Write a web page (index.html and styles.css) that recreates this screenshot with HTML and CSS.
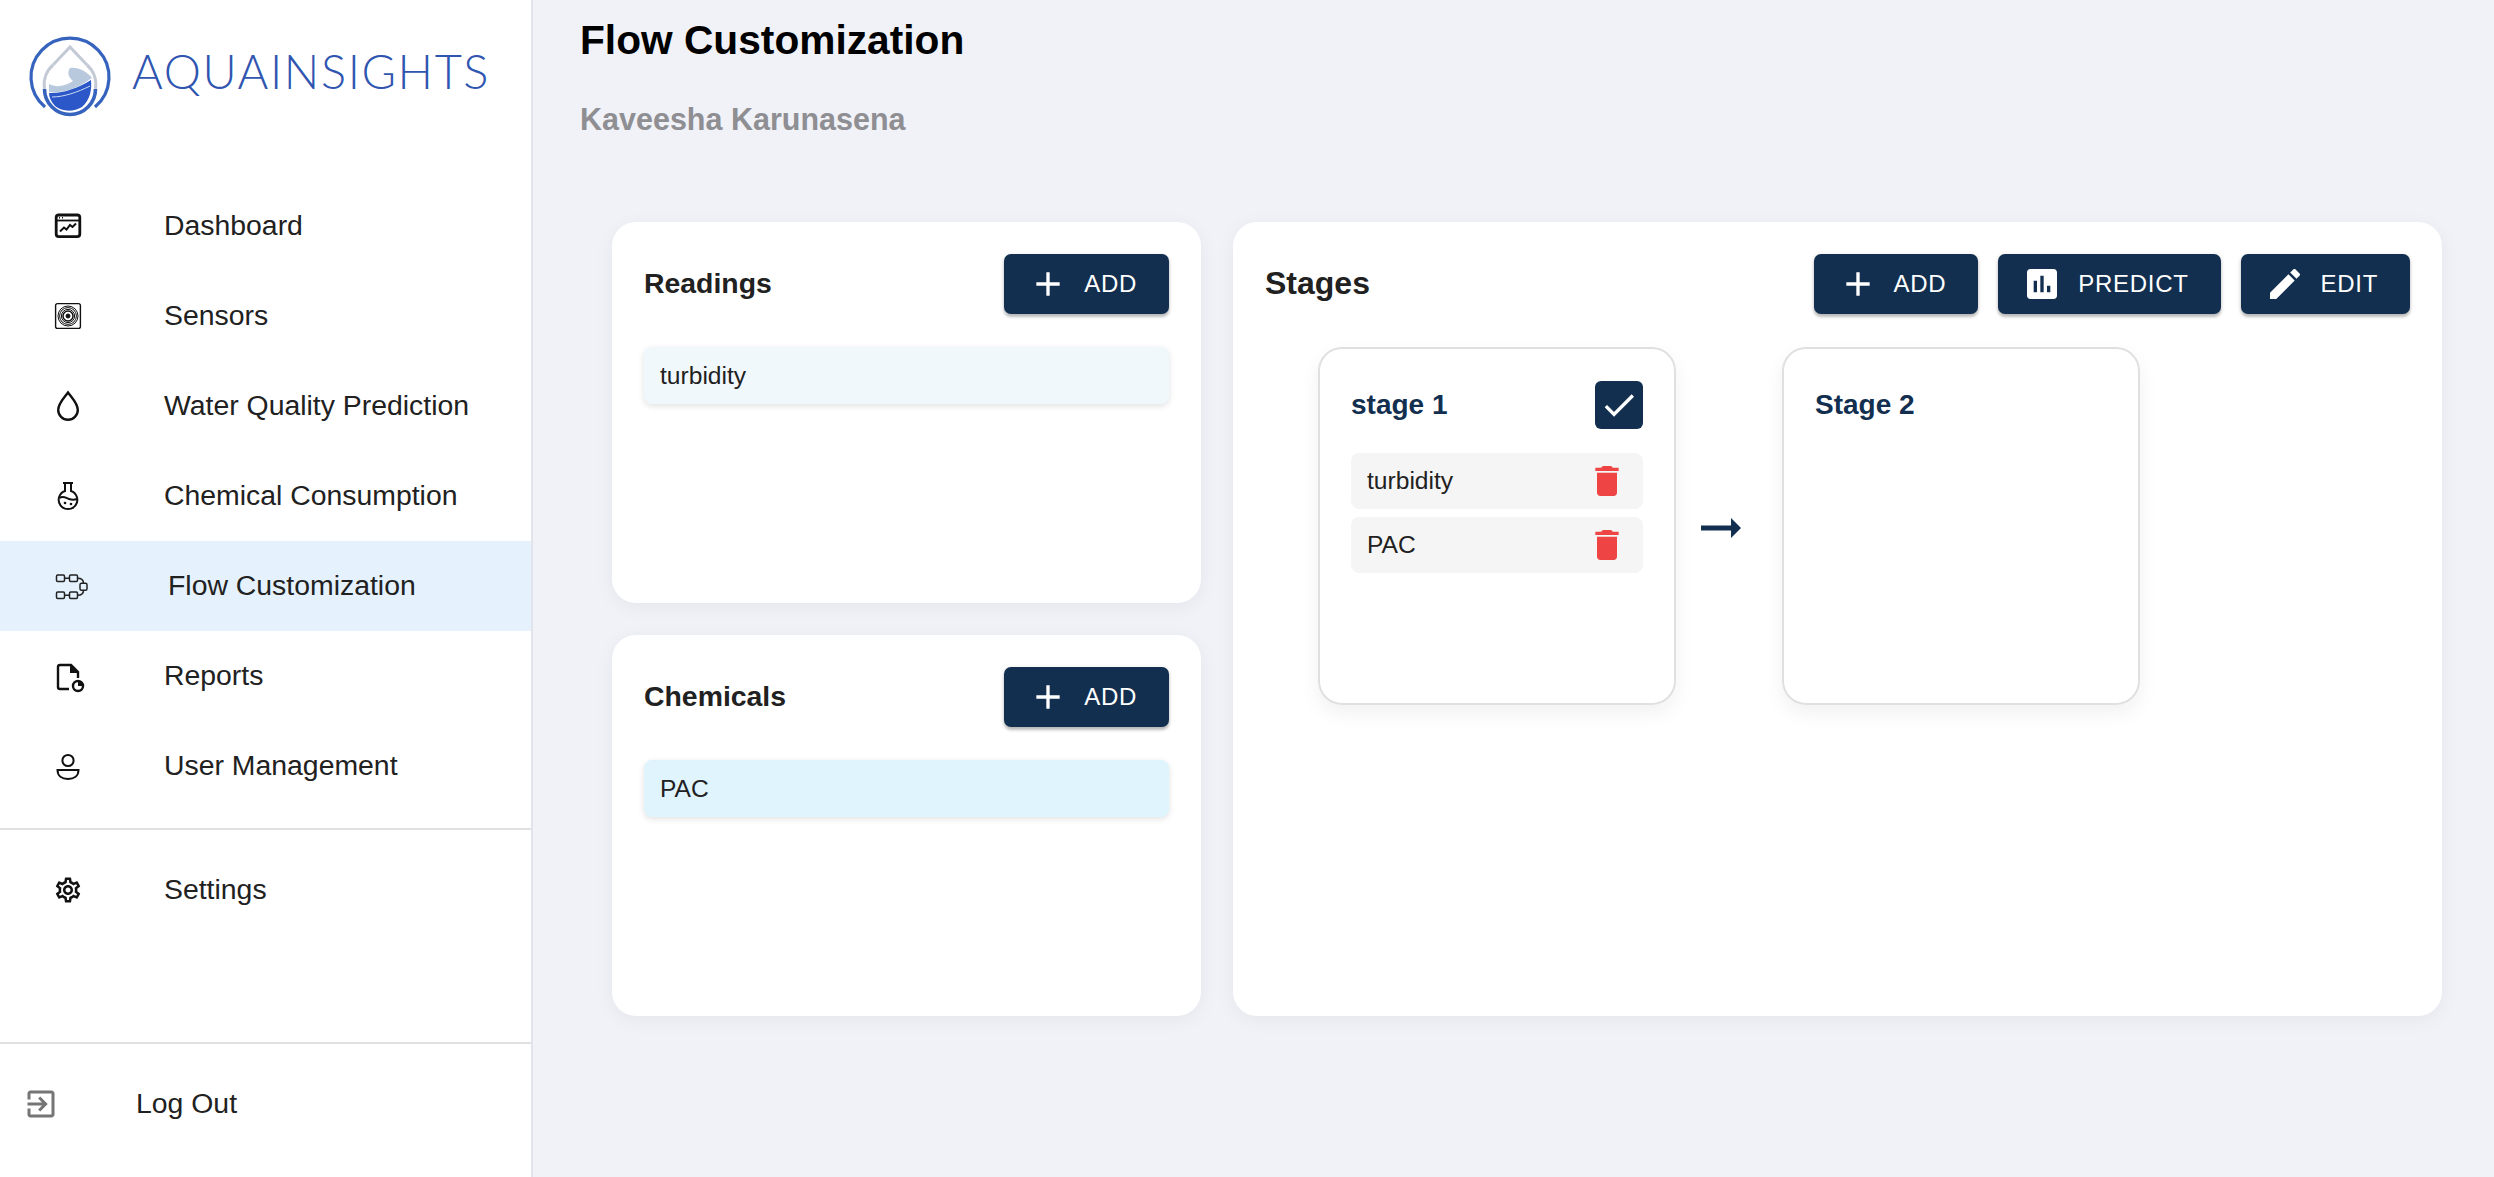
FILE: index.html
```html
<!doctype html>
<html lang="en">

<head>
  <meta charset="utf-8" />
  <meta name="viewport" content="width=device-width, initial-scale=1.0" />
  <title>Flow Customization</title>
  <link rel="stylesheet" href="styles.css">
</head>

<body>
  <aside class="sidebar">
    <div class="logo">
      <svg class="logo-mark" width="100" height="96" viewBox="0 0 100 96">
        <path d="M25 79 A39 39 0 1 1 75 79" fill="none" stroke="#3563bd" stroke-width="3.2" />
        <path d="M33 37 L50 19 L67 37" fill="none" stroke="#c3cad6" stroke-width="3" />
        <path d="M33 37 A26 26 0 0 0 24.5 61" fill="none" stroke="#c3cad6" stroke-width="3" />
        <path d="M67 37 A26 26 0 0 1 75.5 61" fill="none" stroke="#c3cad6" stroke-width="3" />
        <path d="M24.5 61 A25.5 25.5 0 0 0 75.5 61" fill="none" stroke="#3563bd" stroke-width="3.6" />
        <path d="M29 56 C37 60 45 58 53 53 C48 49 47 44 50 40 C59 39 67 44 72 50 C58 60 42 66 29 64 Z" fill="#b9c9dd" />
        <path d="M29 65 C42 66 58 60 71 52 C72 62 70 72 62 79 C54 84 42 84 35 78 C31 74 29 69 29 65 Z" fill="#2b57c9" />
        <path d="M32 69 C44 69 58 64 70 58" fill="none" stroke="#c9d8f2" stroke-width="1" />
      </svg>
      <span class="logo-text">AQUAINSIGHTS</span>
    </div>

    <nav class="nav">
      <a class="nav-item" href="#">
        <svg class="nav-icon" width="36" height="36" viewBox="0 0 36 36" fill="none" stroke="#111" stroke-width="2.8">
          <rect x="6.2" y="7" width="23.6" height="21.6" rx="2.5" />
          <path d="M6.5 12.5 H29.5" stroke-width="1.8" />
          <path d="M9 9.8 H10 M12 9.8 H13" stroke-width="1.6" />
          <path d="M10 23.5 L14 19.5 L16.5 21.5 L20 17 L22.5 19 L26 15.5" stroke-width="2" />
        </svg>
        <span>Dashboard</span>
      </a>
      <a class="nav-item" href="#">
        <svg class="nav-icon" width="36" height="36" viewBox="0 0 36 36" fill="none" stroke="#111" stroke-width="1">
          <rect x="5.6" y="5.6" width="24.8" height="24.8" rx="2" stroke-width="1.4" />
          <circle cx="18" cy="18" r="10" />
          <circle cx="18" cy="18" r="8.4" />
          <circle cx="18" cy="18" r="6.6" />
          <circle cx="18" cy="18" r="5" stroke-width="1.5" />
          <circle cx="18" cy="18" r="2" fill="#111" />
        </svg>
        <span>Sensors</span>
      </a>
      <a class="nav-item" href="#">
        <svg class="nav-icon" width="36" height="36" viewBox="0 0 36 36" fill="none" stroke="#111" stroke-width="2.4">
          <path d="M18 4.5 C14 10 8.2 15.5 8.2 22 A9.8 9.8 0 0 0 27.8 22 C27.8 15.5 22 10 18 4.5 Z" />
        </svg>
        <span>Water Quality Prediction</span>
      </a>
      <a class="nav-item" href="#">
        <svg class="nav-icon" width="36" height="36" viewBox="0 0 36 36" fill="none" stroke="#111" stroke-width="2">
          <path d="M13 5 H23" />
          <path d="M15 5 V13 A9.3 9.3 0 1 0 21 13 V5" />
          <path d="M9.5 20 C13 17.5 16 20 19 21 C22 22 24.5 22 26.8 21" />
          <circle cx="15" cy="25" r="1.3" fill="#111" stroke="none" />
          <circle cx="21" cy="26" r="1.3" fill="#111" stroke="none" />
        </svg>
        <span>Chemical Consumption</span>
      </a>
      <a class="nav-item nav-item-active" href="#">
        <svg class="nav-icon nav-icon-wide" width="40" height="36" viewBox="0 0 40 36" fill="none" stroke="#222" stroke-width="1.5">
          <rect x="6.5" y="7" width="8" height="6.5" rx="1.2" />
          <rect x="19.5" y="7" width="8" height="6.5" rx="1.2" />
          <rect x="6.5" y="24" width="8" height="6.5" rx="1.2" />
          <rect x="19.5" y="24" width="8" height="6.5" rx="1.2" />
          <rect x="30" y="15.2" width="7" height="7" rx="1.5" />
          <path d="M14.5 10.2 H19.5 M14.5 27.2 H19.5 M27.5 10.2 C31 10.2 33.5 11 33.5 15.2 M27.5 27.2 C31 27.2 33.5 26.5 33.5 22.2" />
        </svg>
        <span>Flow Customization</span>
      </a>
      <a class="nav-item" href="#">
        <svg class="nav-icon" width="36" height="36" viewBox="0 0 36 36" fill="none" stroke="#111" stroke-width="2.4">
          <path d="M19 31 H10 A2 2 0 0 1 8 29 V9 A2 2 0 0 1 10 7 H21 L28 14 V20" />
          <path d="M20 6.5 L28.5 15 H20 Z" fill="#111" stroke="none" />
          <circle cx="28" cy="28" r="5" fill="#fff" />
          <path d="M28 28 V23 A5 5 0 0 1 33 28 Z" fill="#111" stroke="none" />
        </svg>
        <span>Reports</span>
      </a>
      <a class="nav-item" href="#">
        <svg class="nav-icon" width="36" height="36" viewBox="0 0 36 36" fill="none" stroke="#111" stroke-width="2">
          <circle cx="18" cy="12.5" r="5.6" />
          <path d="M7.5 22 H28.5 C28.5 28 24 31 18 31 C12 31 7.5 28 7.5 22 Z" />
        </svg>
        <span>User Management</span>
      </a>
    </nav>

    <hr class="divider divider-nav">

    <a class="nav-item" href="#">
      <svg class="nav-icon nav-icon-gear" width="30" height="30" viewBox="0 0 24 24" fill="#111">
        <path d="M19.43 12.98c.04-.32.07-.64.07-.98 0-.34-.03-.66-.07-.98l2.11-1.65c.19-.15.24-.42.12-.64l-2-3.46c-.09-.16-.26-.25-.44-.25-.06 0-.12.01-.17.03l-2.49 1c-.52-.4-1.08-.73-1.69-.98l-.38-2.65C14.46 2.18 14.25 2 14 2h-4c-.25 0-.46.18-.49.42l-.38 2.65c-.61.25-1.17.59-1.69.98l-2.49-1c-.06-.02-.12-.03-.18-.03-.17 0-.34.09-.43.25l-2 3.46c-.13.22-.07.49.12.64l2.11 1.65c-.04.32-.07.65-.07.98 0 .33.03.66.07.98l-2.11 1.65c-.19.15-.24.42-.12.64l2 3.46c.09.16.26.25.44.25.06 0 .12-.01.17-.03l2.49-1c.52.4 1.08.73 1.69.98l.38 2.65c.03.24.24.42.49.42h4c.25 0 .46-.18.49-.42l.38-2.65c.61-.25 1.17-.59 1.69-.98l2.49 1c.06.02.12.03.18.03.17 0 .34-.09.43-.25l2-3.46c.12-.22.07-.49-.12-.64l-2.11-1.65zm-1.98-1.71c.04.31.05.52.05.73 0 .21-.02.43-.05.73l-.14 1.13.89.7 1.08.84-.7 1.21-1.27-.51-1.04-.42-.9.68c-.43.32-.84.56-1.25.73l-1.06.43-.16 1.13-.2 1.35h-1.4l-.19-1.35-.16-1.13-1.06-.43c-.43-.18-.83-.41-1.23-.71l-.91-.7-1.06.43-1.27.51-.7-1.21 1.08-.84.89-.7-.14-1.13c-.03-.31-.05-.54-.05-.74s.02-.43.05-.73l.14-1.13-.89-.7-1.08-.84.7-1.21 1.27.51 1.04.42.9-.68c.43-.32.84-.56 1.25-.73l1.06-.43.16-1.13.2-1.35h1.39l.19 1.35.16 1.13 1.06.43c.43.18.83.41 1.23.71l.91.7 1.06-.43 1.27-.51.7 1.21-1.07.85-.89.7.14 1.13zM12 8c-2.21 0-4 1.79-4 4s1.79 4 4 4 4-1.79 4-4-1.79-4-4-4zm0 6c-1.1 0-2-.9-2-2s.9-2 2-2 2 .9 2 2-.9 2-2 2z" />
      </svg>
      <span>Settings</span>
    </a>

    <div class="sidebar-foot">
      <hr class="divider">
      <a class="nav-item nav-item-logout" href="#">
        <svg class="nav-icon" width="36" height="36" viewBox="0 0 24 24" fill="#757575">
          <path d="M10.09 15.59L11.5 17l5-5-5-5-1.41 1.41L12.67 11H3v2h9.67l-2.58 2.59zM19 3H5c-1.11 0-2 .9-2 2v4h2V5h14v14H5v-4H3v4c0 1.1.89 2 2 2h14c1.1 0 2-.9 2-2V5c0-1.1-.9-2-2-2z" />
        </svg>
        <span>Log Out</span>
      </a>
    </div>
  </aside>

  <main class="content">
    <h1 class="page-title">Flow Customization</h1>
    <div class="page-user">Kaveesha Karunasena</div>

    <div class="board">
      <section class="card card-readings">
        <div class="card-head">
          <h2>Readings</h2>
          <button class="button">
            <svg width="40" height="40" viewBox="0 0 24 24" fill="#fff"><path d="M19 13h-6v6h-2v-6H5v-2h6V5h2v6h6v2z" /></svg>
            ADD
          </button>
        </div>
        <div class="pick pick-reading">turbidity</div>
      </section>

      <section class="card card-chemicals">
        <div class="card-head">
          <h2>Chemicals</h2>
          <button class="button">
            <svg width="40" height="40" viewBox="0 0 24 24" fill="#fff"><path d="M19 13h-6v6h-2v-6H5v-2h6V5h2v6h6v2z" /></svg>
            ADD
          </button>
        </div>
        <div class="pick pick-chemical">PAC</div>
      </section>

      <section class="card card-stages">
        <div class="card-head">
          <h2 class="stages-title">Stages</h2>
          <div class="actions">
            <button class="button">
              <svg width="40" height="40" viewBox="0 0 24 24" fill="#fff"><path d="M19 13h-6v6h-2v-6H5v-2h6V5h2v6h6v2z" /></svg>
              ADD
            </button>
            <button class="button">
              <svg width="40" height="40" viewBox="0 0 24 24" fill="#fff"><path d="M19 3H5c-1.1 0-2 .9-2 2v14c0 1.1.9 2 2 2h14c1.1 0 2-.9 2-2V5c0-1.1-.9-2-2-2zM9 17H7v-7h2v7zm4 0h-2V7h2v10zm4 0h-2v-4h2v4z" /></svg>
              PREDICT
            </button>
            <button class="button">
              <svg width="40" height="40" viewBox="0 0 24 24" fill="#fff"><path d="M3 17.25V21h3.75L17.81 9.94l-3.75-3.75L3 17.25zM20.71 7.04c.39-.39.39-1.02 0-1.41l-2.34-2.34c-.39-.39-1.02-.39-1.41 0l-1.83 1.83 3.75 3.75 1.83-1.83z" /></svg>
              EDIT
            </button>
          </div>
        </div>

        <div class="stages">
          <div class="stage">
            <div class="stage-head">
              <h3>stage 1</h3>
              <span class="check">
                <svg width="40" height="40" viewBox="0 0 24 24" fill="#fff"><path d="M9 16.17L4.83 12l-1.42 1.41L9 19 21 7l-1.41-1.41z" /></svg>
              </span>
            </div>
            <div class="stage-item">
              turbidity
              <svg width="40" height="40" viewBox="0 0 24 24" fill="#ef4444"><path d="M6 19c0 1.1.9 2 2 2h8c1.1 0 2-.9 2-2V7H6v12zM19 4h-3.5l-1-1h-5l-1 1H5v2h14V4z" /></svg>
            </div>
            <div class="stage-item">
              PAC
              <svg width="40" height="40" viewBox="0 0 24 24" fill="#ef4444"><path d="M6 19c0 1.1.9 2 2 2h8c1.1 0 2-.9 2-2V7H6v12zM19 4h-3.5l-1-1h-5l-1 1H5v2h14V4z" /></svg>
            </div>
          </div>

          <svg class="arrow" width="60" height="60" viewBox="0 0 24 24" fill="#132f50"><path d="M16.01 11H4v2h12.01v3L20 12l-3.99-4z" /></svg>

          <div class="stage">
            <div class="stage-head">
              <h3>Stage 2</h3>
            </div>
          </div>
        </div>
      </section>
    </div>
  </main>
</body>

</html>
```

FILE: styles.css
```css
* {
  box-sizing: border-box;
}

html,
body {
  height: 100%;
}

body {
  margin: 0;
  display: flex;
  overflow: hidden;
  background-color: #f0f2f8;
  color: #212121;
  font-family: "Liberation Sans", Arial, sans-serif;
}

a {
  color: inherit;
  text-decoration: none;
}

/* Sidebar */
.sidebar {
  display: flex;
  flex-direction: column;
  flex: none;
  width: 533px;
  height: 1177px;
  background-color: #fff;
  border-right: 2px solid #e2e4ec;
}

.logo {
  display: flex;
  align-items: flex-start;
  height: 181px;
  padding: 28px 0 0 20px;
}

.logo-mark {
  flex: none;
}

.logo-text {
  margin: 14px 0 0 12px;
  font-family: Lato, sans-serif;
  font-weight: 300;
  font-size: 47px;
  letter-spacing: 1.6px;
  line-height: 58px;
  color: #2f55b0;
}

.nav {
  display: flex;
  flex-direction: column;
}

.nav-item {
  display: flex;
  align-items: center;
  height: 90px;
  padding-left: 50px;
  font-size: 28.4px;
}

.nav-item span {
  padding-bottom: 2px;
}

.nav-item-active {
  background-color: #e5f2fd;
}

.nav-icon {
  flex: none;
  margin-right: 78px;
}

.nav-icon-gear {
  margin: 0 81px 0 3px;
}

.nav-item-logout {
  padding-left: 23px;
}

.nav-item-logout .nav-icon {
  margin-right: 77px;
}

.divider {
  width: 100%;
  height: 2px;
  margin: 0;
  border: 0;
  background-color: #e0e0e0;
}

.divider-nav {
  margin: 17px 0 15px;
}

.sidebar-foot {
  margin-top: auto;
  padding-bottom: 28px;
}

.sidebar-foot .nav-item {
  margin-top: 15px;
}

/* Main area */
.content {
  flex: 1;
  padding-left: 47px;
}

.page-title {
  margin: 0;
  padding-top: 17px;
  font-size: 40.7px;
  line-height: 46px;
  color: #000;
}

.page-user {
  margin-top: 38px;
  font-size: 30.5px;
  font-weight: bold;
  line-height: 36px;
  color: #8e8e93;
}

.board {
  display: grid;
  grid-template-columns: 589px 1209px;
  grid-template-rows: 381px 381px;
  gap: 32px;
  margin: 85px 0 0 32px;
}

.card {
  padding: 32px;
  background-color: #fff;
  border-radius: 24px;
  box-shadow: 0 4px 20px rgba(0, 0, 0, 0.05);
}

.card-stages {
  grid-column: 2;
  grid-row: 1 / 3;
}

.card-readings {
  grid-column: 1;
  grid-row: 1;
}

.card-chemicals {
  grid-column: 1;
  grid-row: 2;
}

.card-head {
  display: flex;
  align-items: center;
  justify-content: space-between;
  margin-bottom: 33px;
}

.card-head h2 {
  margin: 0;
  padding-bottom: 1px;
  font-size: 28.4px;
}

.card-head .stages-title {
  font-size: 32px;
}

.actions {
  display: flex;
  gap: 20px;
}

.button {
  display: flex;
  align-items: center;
  gap: 16px;
  height: 60px;
  padding: 0 32px 0 24px;
  border: 0;
  border-radius: 7px;
  background-color: #132f50;
  color: #fff;
  font-family: inherit;
  font-size: 24px;
  letter-spacing: 0.7px;
  box-shadow: 0 3px 3px rgba(0, 0, 0, 0.22), 0 1px 5px rgba(0, 0, 0, 0.12);
}

.pick {
  display: flex;
  align-items: center;
  height: 57px;
  padding-left: 16px;
  border-radius: 8px;
  font-size: 24.6px;
  box-shadow: 0 2px 6px rgba(0, 0, 0, 0.12);
}

.pick-reading {
  background-color: #f1f8fc;
}

.pick-chemical {
  background-color: #e0f4fd;
}

/* Stage cards */
.stages {
  display: flex;
  padding-left: 53px;
}

.stage {
  width: 358px;
  height: 358px;
  padding: 32px 31px;
  border: 2px solid #e0e0e0;
  border-radius: 24px;
  box-shadow: 0 8px 20px rgba(0, 0, 0, 0.06);
}

.stage-head {
  display: flex;
  align-items: center;
  justify-content: space-between;
  height: 48px;
  margin-bottom: 24px;
}

.stage-head h3 {
  margin: 0;
  font-size: 28px;
  color: #132f50;
}

.check {
  display: flex;
  align-items: center;
  justify-content: center;
  width: 48px;
  height: 48px;
  border-radius: 6px;
  background-color: #132f50;
}

.stage-item {
  display: flex;
  align-items: center;
  justify-content: space-between;
  height: 56px;
  margin-bottom: 8px;
  padding: 0 16px;
  border-radius: 8px;
  background-color: #f5f5f5;
  font-size: 24.6px;
}

.arrow {
  flex: none;
  align-self: center;
  margin: 4px 31px 0 15px;
}
```
